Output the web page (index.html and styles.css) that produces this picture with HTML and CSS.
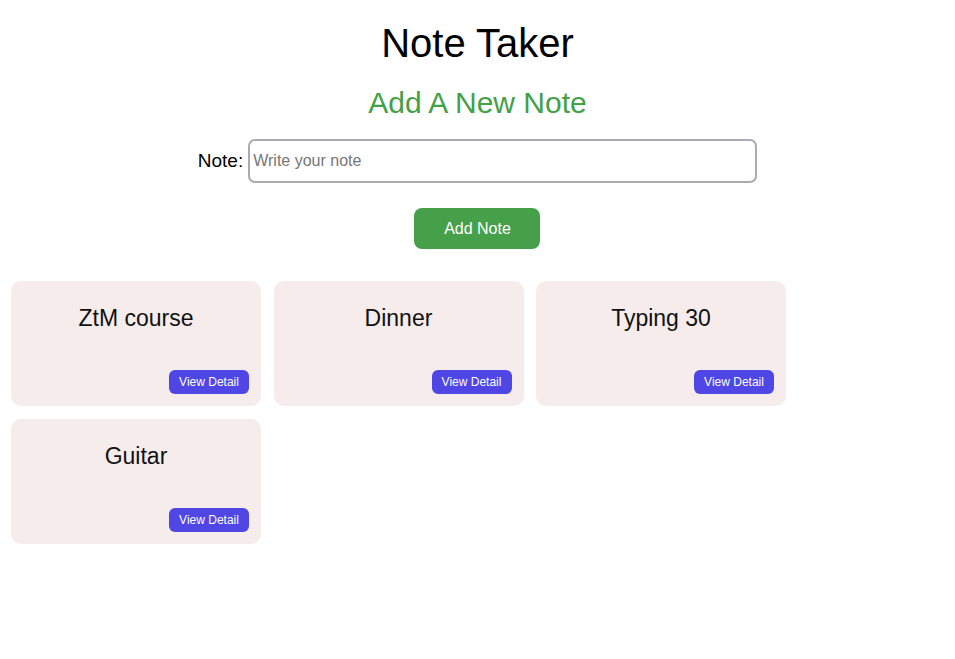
FILE: index.html
```html
<!DOCTYPE html>
<html>
<head>
<meta charset="utf-8">
<title>Note Taker</title>
<link rel="stylesheet" href="styles.css">
</head>
<body>
<header class="header">
  <h1 class="title">Note Taker</h1>
  <h2 class="subtitle">Add A New Note</h2>
  <form class="note-form">
    <div class="field">
      <label class="field-label" for="note">Note:</label>
      <input class="field-input" id="note" type="text" placeholder="Write your note">
    </div>
    <button type="button" class="add-btn">Add Note</button>
  </form>
</header>
<main class="notes">
  <div class="card">
    <h3 class="card-title">ZtM course</h3>
    <button type="button" class="detail-btn">View Detail</button>
  </div>
  <div class="card">
    <h3 class="card-title">Dinner</h3>
    <button type="button" class="detail-btn">View Detail</button>
  </div>
  <div class="card">
    <h3 class="card-title">Typing 30</h3>
    <button type="button" class="detail-btn">View Detail</button>
  </div>
  <div class="card">
    <h3 class="card-title">Guitar</h3>
    <button type="button" class="detail-btn">View Detail</button>
  </div>
</main>
</body>
</html>
```
FILE: styles.css
```css
* { box-sizing: border-box; }
body {
  margin: 0;
  background: #ffffff;
  font-family: "Liberation Sans", Arial, sans-serif;
  color: #000;
}
.header {
  display: flex;
  flex-direction: column;
  align-items: center;
}
.title {
  margin: 20px 0 0;
  font-size: 40px;
  line-height: 46px;
  font-weight: 400;
}
.subtitle {
  margin: 20px 0 0;
  font-size: 30px;
  line-height: 34px;
  font-weight: 400;
  color: #43a047;
}
.note-form {
  display: flex;
  flex-direction: column;
  align-items: center;
}
.field {
  display: flex;
  align-items: center;
  gap: 5px;
  margin-top: 19px;
}
.field-label {
  font-size: 19px;
}
.field-input {
  width: 509px;
  height: 44px;
  border: 2px solid #aaaab2;
  border-radius: 7px;
  padding: 0 3px;
  font-family: "Liberation Sans", Arial, sans-serif;
  font-size: 16px;
  outline: none;
}
.field-input::placeholder { color: #767676; }
.add-btn {
  margin-top: 25px;
  width: 126px;
  height: 41px;
  border: none;
  border-radius: 8px;
  background: #46a04a;
  color: #fff;
  font-family: "Liberation Sans", Arial, sans-serif;
  font-size: 16px;
}
.notes {
  display: grid;
  grid-template-columns: repeat(3, 250px);
  gap: 13px 12.5px;
  padding: 0 11px;
  margin-top: 32px;
}
.card {
  height: 125px;
  background: #f6ecec;
  border-radius: 10px;
  padding: 12px;
  display: flex;
  flex-direction: column;
}
.card-title {
  margin: 11px 0 0;
  text-align: center;
  font-size: 23px;
  line-height: 28px;
  font-weight: 400;
  color: #111;
}
.detail-btn {
  margin-top: auto;
  align-self: flex-end;
  width: 80px;
  height: 24px;
  border: none;
  border-radius: 6px;
  background: #4f46e5;
  color: #fff;
  font-family: "Liberation Sans", Arial, sans-serif;
  font-size: 12px;
  padding: 0;
}
```
